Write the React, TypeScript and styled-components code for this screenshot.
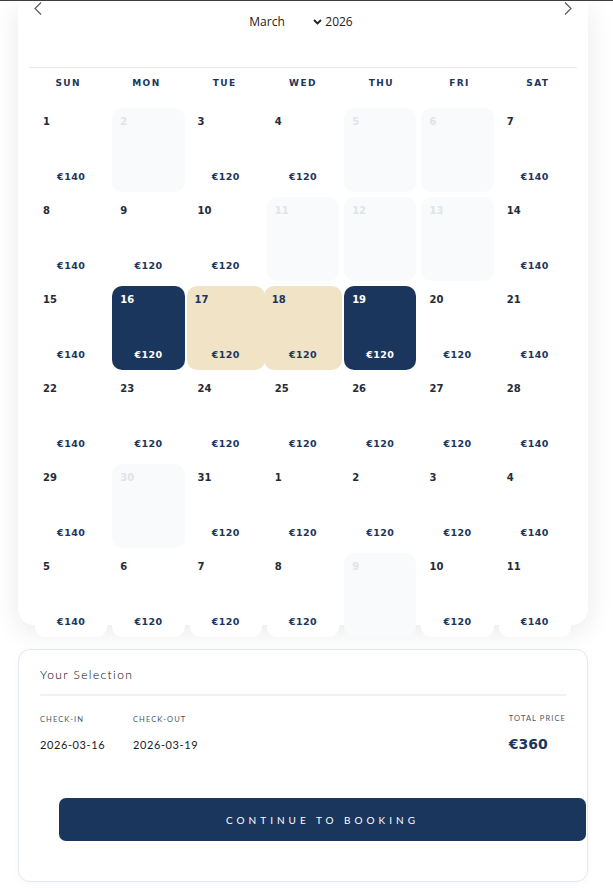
import React from "react";
import styled, { createGlobalStyle } from "styled-components";

const NAVY = "#1b365d";
const TAN = "#f1e3c5";

const GlobalStyle = createGlobalStyle`
  html, body {
    margin: 0;
    padding: 0;
    background: #ffffff;
  }
  body {
    font-family: "Open Sans", "DejaVu Sans", sans-serif;
  }
`;

const Page = styled.div`
  border-top: 1px solid #3c4043;
  padding: 0 25px 6px 18px;
  min-height: 887px;
  box-sizing: border-box;
`;

const CalendarCard = styled.div`
  display: flow-root;
  background: #fff;
  border-radius: 0 0 16px 16px;
  box-shadow: 0 6px 28px rgba(0, 0, 0, 0.09);
  padding: 0 11px;
`;

const Header = styled.div`
  display: flex;
  justify-content: space-between;
  align-items: flex-start;
  height: 66px;
  padding: 0 3px;
`;

const ArrowButton = styled.button`
  border: none;
  background: none;
  padding: 0;
  margin-top: 0;
  width: 12px;
  height: 14px;
  color: #555;
  cursor: pointer;
  display: flex;
  align-items: center;
  justify-content: center;
`;

const MonthControls = styled.div`
  display: flex;
  align-items: center;
  margin-top: 13px;
  margin-right: 4px;
  font-size: 12px;
  line-height: 16px;
  color: #222;
`;

const MonthSelect = styled.div`
  width: 73px;
  display: flex;
  justify-content: space-between;
  align-items: center;
  margin-right: 3px;
`;

const WeekHeader = styled.div`
  display: grid;
  grid-template-columns: repeat(7, 1fr);
  border-top: 1px solid #e5e8ec;
  padding: 10px 0 20px;
`;

const WeekLabel = styled.div`
  text-align: center;
  font-family: "DejaVu Sans", sans-serif;
  font-weight: 700;
  font-size: 9px;
  line-height: 10px;
  letter-spacing: 1.4px;
  color: ${NAVY};
`;

const DaysGrid = styled.div`
  display: grid;
  grid-template-columns: repeat(7, 1fr);
  grid-auto-rows: 84px;
  column-gap: 5px;
  row-gap: 5px;
  padding: 0 6px;
  margin-bottom: -12px;
`;

type DayKind = "normal" | "disabled" | "selected" | "range";

const DayCell = styled.div<{ $kind: DayKind }>`
  display: flex;
  flex-direction: column;
  justify-content: space-between;
  padding: 8px 8px 9px;
  border-radius: 10px;
  box-sizing: border-box;
  margin: ${(p) => (p.$kind === "range" ? "0 -3px" : "0")};
  background: ${(p) =>
    p.$kind === "selected"
      ? NAVY
      : p.$kind === "range"
      ? TAN
      : p.$kind === "disabled"
      ? "#f9fafc"
      : "#ffffff"};
  font-family: "DejaVu Sans", sans-serif;
`;

const DayNum = styled.div<{ $kind: DayKind }>`
  font-weight: 700;
  font-size: 10px;
  line-height: 12px;
  color: ${(p) =>
    p.$kind === "selected"
      ? "#ffffff"
      : p.$kind === "disabled"
      ? "#dfe3ea"
      : p.$kind === "range"
      ? NAVY
      : "#262b33"};
`;

const Price = styled.div<{ $kind: DayKind }>`
  text-align: center;
  font-weight: 700;
  font-size: 9.5px;
  line-height: 12px;
  letter-spacing: 0.4px;
  color: ${(p) => (p.$kind === "selected" ? "#ffffff" : NAVY)};
`;

const SelectionCard = styled.div`
  margin-top: 24px;
  border: 1px solid #e2e8f0;
  border-radius: 12px;
  background: #fff;
  box-shadow: 0 2px 10px rgba(0, 0, 0, 0.03);
  padding: 17px 21px 40px;
`;

const SelectionTitle = styled.div`
  font-family: Lato, sans-serif;
  font-weight: 300;
  font-size: 12px;
  line-height: 16px;
  letter-spacing: 1.4px;
  color: #000;
  padding-bottom: 11px;
  border-bottom: 2px solid #eef1f5;
`;

const InfoRow = styled.div`
  display: flex;
  margin-top: 19px;
`;

const InfoBlock = styled.div<{ $width?: number; $right?: boolean }>`
  width: ${(p) => (p.$width ? `${p.$width}px` : "auto")};
  margin-left: ${(p) => (p.$right ? "auto" : "0")};
`;

const InfoLabel = styled.div<{ $up?: boolean }>`
  font-family: Lato, sans-serif;
  font-size: 7.5px;
  line-height: 10px;
  letter-spacing: 1.1px;
  color: #4a5568;
  text-transform: uppercase;
  margin-top: ${(p) => (p.$up ? "-1px" : "0")};
`;

const InfoValue = styled.div`
  margin-top: 13px;
  font-family: Lato, sans-serif;
  font-weight: 400;
  font-size: 11px;
  line-height: 14px;
  letter-spacing: 0.6px;
  color: #1a1a1a;
`;

const TotalValue = styled.div`
  margin-top: 11px;
  font-family: "DejaVu Sans", sans-serif;
  font-weight: 700;
  font-size: 14px;
  line-height: 18px;
  color: ${NAVY};
`;

const BookButton = styled.button`
  display: block;
  margin: 45px -20px 0 19px;
  width: calc(100% + 1px);
  height: 43px;
  border: none;
  border-radius: 7px;
  background: ${NAVY};
  color: #fff;
  font-family: Lato, sans-serif;
  font-size: 10px;
  letter-spacing: 4px;
  text-transform: uppercase;
  cursor: pointer;
`;

const Chevron = ({ dir }: { dir: "left" | "right" }) => (
  <svg width="8" height="13" viewBox="0 0 8 13" fill="none">
    <polyline
      points={dir === "left" ? "7,0.5 1,6.5 7,12.5" : "1,0.5 7,6.5 1,12.5"}
      stroke="currentColor"
      strokeWidth="1.1"
    />
  </svg>
);

const SelectCaret = () => (
  <svg width="9" height="6" viewBox="0 0 9 6">
    <polyline points="1,1 4.5,4.5 8,1" stroke="#222" strokeWidth="1.8" fill="none" />
  </svg>
);

interface Day {
  n: number;
  kind: DayKind;
  price?: number;
}

const weekdays = ["SUN", "MON", "TUE", "WED", "THU", "FRI", "SAT"];

const disabled = new Set(["0-2", "0-5", "0-6", "0-11", "0-12", "0-13", "0-30", "1-9"]);

const buildDays = (): Day[] => {
  const days: Day[] = [];
  const push = (n: number, month: number) => {
    const idx = days.length % 7;
    const key = `${month}-${n}`;
    let kind: DayKind = "normal";
    if (disabled.has(key)) kind = "disabled";
    else if (month === 0 && (n === 16 || n === 19)) kind = "selected";
    else if (month === 0 && (n === 17 || n === 18)) kind = "range";
    const price = kind === "disabled" ? undefined : idx === 0 || idx === 6 ? 140 : 120;
    days.push({ n, kind, price });
  };
  for (let i = 1; i <= 31; i++) push(i, 0);
  for (let i = 1; i <= 11; i++) push(i, 1);
  return days;
};

const days = buildDays();

export default function App() {
  return (
    <>
      <GlobalStyle />
      <Page>
        <CalendarCard>
          <Header>
            <ArrowButton aria-label="Previous month">
              <Chevron dir="left" />
            </ArrowButton>
            <MonthControls>
              <MonthSelect>
                <span>March</span>
                <SelectCaret />
              </MonthSelect>
              <span>2026</span>
            </MonthControls>
            <ArrowButton aria-label="Next month">
              <Chevron dir="right" />
            </ArrowButton>
          </Header>
          <WeekHeader>
            {weekdays.map((w) => (
              <WeekLabel key={w}>{w}</WeekLabel>
            ))}
          </WeekHeader>
          <DaysGrid>
            {days.map((d, i) => (
              <DayCell key={i} $kind={d.kind}>
                <DayNum $kind={d.kind}>{d.n}</DayNum>
                {d.price && <Price $kind={d.kind}>€{d.price}</Price>}
              </DayCell>
            ))}
          </DaysGrid>
        </CalendarCard>

        <SelectionCard>
          <SelectionTitle>Your Selection</SelectionTitle>
          <InfoRow>
            <InfoBlock $width={93}>
              <InfoLabel>Check-in</InfoLabel>
              <InfoValue>2026-03-16</InfoValue>
            </InfoBlock>
            <InfoBlock>
              <InfoLabel>Check-out</InfoLabel>
              <InfoValue>2026-03-19</InfoValue>
            </InfoBlock>
            <InfoBlock $right>
              <InfoLabel $up>Total price</InfoLabel>
              <TotalValue>€360</TotalValue>
            </InfoBlock>
          </InfoRow>
          <BookButton>Continue to booking</BookButton>
        </SelectionCard>
      </Page>
    </>
  );
}
